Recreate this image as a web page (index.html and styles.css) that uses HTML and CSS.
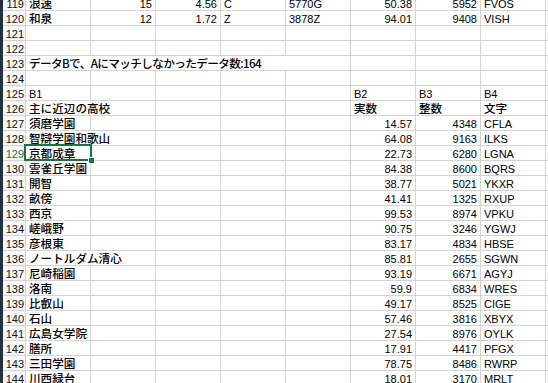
FILE: index.html
```html
<!DOCTYPE html>
<html lang="ja">
<head>
<meta charset="utf-8">
<link rel="stylesheet" href="styles.css">
</head>
<body>
<div class="screen">
  <div class="desk"></div>
  <div class="sheet">
    <div class="row"><div class="h">119</div><div class="c jp">浪速</div><div class="c n">15</div><div class="c n">4.56</div><div class="c">C</div><div class="c">5770G</div><div class="c n">50.38</div><div class="c n">5952</div><div class="c">FVOS</div><div class="c"></div></div>
    <div class="row"><div class="h">120</div><div class="c jp">和泉</div><div class="c n">12</div><div class="c n">1.72</div><div class="c">Z</div><div class="c">3878Z</div><div class="c n">94.01</div><div class="c n">9408</div><div class="c">VISH</div><div class="c"></div></div>
    <div class="row"><div class="h">121</div><div class="c"></div><div class="c"></div><div class="c"></div><div class="c"></div><div class="c"></div><div class="c"></div><div class="c"></div><div class="c"></div><div class="c"></div></div>
    <div class="row"><div class="h">122</div><div class="c"></div><div class="c"></div><div class="c"></div><div class="c"></div><div class="c"></div><div class="c"></div><div class="c"></div><div class="c"></div><div class="c"></div></div>
    <div class="row"><div class="h">123</div><div class="c jp s5 note">データBで、Aにマッチしなかったデータ数:164</div><div class="c"></div><div class="c"></div><div class="c"></div><div class="c"></div></div>
    <div class="row"><div class="h">124</div><div class="c"></div><div class="c"></div><div class="c"></div><div class="c"></div><div class="c"></div><div class="c"></div><div class="c"></div><div class="c"></div><div class="c"></div></div>
    <div class="row"><div class="h">125</div><div class="c">B1</div><div class="c"></div><div class="c"></div><div class="c"></div><div class="c"></div><div class="c">B2</div><div class="c">B3</div><div class="c">B4</div><div class="c"></div></div>
    <div class="row"><div class="h">126</div><div class="c jp s2">主に近辺の高校</div><div class="c"></div><div class="c"></div><div class="c"></div><div class="c jp">実数</div><div class="c jp">整数</div><div class="c jp">文字</div><div class="c"></div></div>
    <div class="row"><div class="h">127</div><div class="c jp">須磨学園</div><div class="c"></div><div class="c"></div><div class="c"></div><div class="c"></div><div class="c n">14.57</div><div class="c n">4348</div><div class="c">CFLA</div><div class="c"></div></div>
    <div class="row"><div class="h">128</div><div class="c jp s2">智辯学園和歌山</div><div class="c"></div><div class="c"></div><div class="c"></div><div class="c n">64.08</div><div class="c n">9163</div><div class="c">ILKS</div><div class="c"></div></div>
    <div class="row"><div class="h sel">129</div><div class="c jp active">京都成章<span class="selbox"></span><span class="handle"></span></div><div class="c"></div><div class="c"></div><div class="c"></div><div class="c"></div><div class="c n">22.73</div><div class="c n">6280</div><div class="c">LGNA</div><div class="c"></div></div>
    <div class="row"><div class="h">130</div><div class="c jp">雲雀丘学園</div><div class="c"></div><div class="c"></div><div class="c"></div><div class="c"></div><div class="c n">84.38</div><div class="c n">8600</div><div class="c">BQRS</div><div class="c"></div></div>
    <div class="row"><div class="h">131</div><div class="c jp">開智</div><div class="c"></div><div class="c"></div><div class="c"></div><div class="c"></div><div class="c n">38.77</div><div class="c n">5021</div><div class="c">YKXR</div><div class="c"></div></div>
    <div class="row"><div class="h">132</div><div class="c jp">畝傍</div><div class="c"></div><div class="c"></div><div class="c"></div><div class="c"></div><div class="c n">41.41</div><div class="c n">1325</div><div class="c">RXUP</div><div class="c"></div></div>
    <div class="row"><div class="h">133</div><div class="c jp">西京</div><div class="c"></div><div class="c"></div><div class="c"></div><div class="c"></div><div class="c n">99.53</div><div class="c n">8974</div><div class="c">VPKU</div><div class="c"></div></div>
    <div class="row"><div class="h">134</div><div class="c jp">嵯峨野</div><div class="c"></div><div class="c"></div><div class="c"></div><div class="c"></div><div class="c n">90.75</div><div class="c n">3246</div><div class="c">YGWJ</div><div class="c"></div></div>
    <div class="row"><div class="h">135</div><div class="c jp">彦根東</div><div class="c"></div><div class="c"></div><div class="c"></div><div class="c"></div><div class="c n">83.17</div><div class="c n">4834</div><div class="c">HBSE</div><div class="c"></div></div>
    <div class="row"><div class="h">136</div><div class="c jp s2">ノートルダム清心</div><div class="c"></div><div class="c"></div><div class="c"></div><div class="c n">85.81</div><div class="c n">2655</div><div class="c">SGWN</div><div class="c"></div></div>
    <div class="row"><div class="h">137</div><div class="c jp">尼崎稲園</div><div class="c"></div><div class="c"></div><div class="c"></div><div class="c"></div><div class="c n">93.19</div><div class="c n">6671</div><div class="c">AGYJ</div><div class="c"></div></div>
    <div class="row"><div class="h">138</div><div class="c jp">洛南</div><div class="c"></div><div class="c"></div><div class="c"></div><div class="c"></div><div class="c n">59.9</div><div class="c n">6834</div><div class="c">WRES</div><div class="c"></div></div>
    <div class="row"><div class="h">139</div><div class="c jp">比叡山</div><div class="c"></div><div class="c"></div><div class="c"></div><div class="c"></div><div class="c n">49.17</div><div class="c n">8525</div><div class="c">CIGE</div><div class="c"></div></div>
    <div class="row"><div class="h">140</div><div class="c jp">石山</div><div class="c"></div><div class="c"></div><div class="c"></div><div class="c"></div><div class="c n">57.46</div><div class="c n">3816</div><div class="c">XBYX</div><div class="c"></div></div>
    <div class="row"><div class="h">141</div><div class="c jp">広島女学院</div><div class="c"></div><div class="c"></div><div class="c"></div><div class="c"></div><div class="c n">27.54</div><div class="c n">8976</div><div class="c">OYLK</div><div class="c"></div></div>
    <div class="row"><div class="h">142</div><div class="c jp">膳所</div><div class="c"></div><div class="c"></div><div class="c"></div><div class="c"></div><div class="c n">17.91</div><div class="c n">4417</div><div class="c">PFGX</div><div class="c"></div></div>
    <div class="row"><div class="h">143</div><div class="c jp">三田学園</div><div class="c"></div><div class="c"></div><div class="c"></div><div class="c"></div><div class="c n">78.75</div><div class="c n">8486</div><div class="c">RWRP</div><div class="c"></div></div>
    <div class="row"><div class="h">144</div><div class="c jp">川西緑台</div><div class="c"></div><div class="c"></div><div class="c"></div><div class="c"></div><div class="c n">18.01</div><div class="c n">3170</div><div class="c">MRLT</div><div class="c"></div></div>
  </div>
</div>
</body>
</html>
```
FILE: styles.css
```css
* { box-sizing: border-box; }
html, body { margin: 0; padding: 0; background: #fff; }
body { width: 548px; height: 383px; overflow: hidden; }
.screen { display: flex; height: 383px; }
.desk { width: 3px; flex: none; background: #23313f; }
.sheet {
  flex: 1;
  margin-top: -4px;
  font-family: "Liberation Sans", "Noto Sans CJK JP", sans-serif;
  font-size: 11px;
  color: #000;
}
.row {
  display: grid;
  grid-template-columns: 23px repeat(8, 65px) 1fr;
  height: 15px;
}
.h, .c {
  height: 15px;
  border-right: 1px solid #d3d3d3;
  border-bottom: 1px solid #d3d3d3;
  line-height: 14px;
  white-space: nowrap;
  padding-top: 1px;
}
.h {
  background: #f8f8f8;
  text-align: right;
  padding-right: 1px;
  color: #111;
}
.h.sel { color: #1e7145; }
.c { padding-left: 3px; padding-right: 3px; }
.n { text-align: right; }
.jp {
  font-family: "Noto Sans CJK JP", sans-serif;
  font-size: 11.6px;
  font-weight: 500;
  padding-top: 0;
}
.s2 { grid-column: span 2; }
.s5 { grid-column: span 5; }
.note { letter-spacing: -0.6px; }
.active { position: relative; }
.selbox {
  position: absolute;
  left: -2px;
  top: -2px;
  width: 68px;
  height: 17px;
  border: 2px solid #1e7145;
}
.handle {
  position: absolute;
  left: 62px;
  top: 11px;
  width: 7px;
  height: 7px;
  background: #1e7145;
  border: 1px solid #fff;
}
```
